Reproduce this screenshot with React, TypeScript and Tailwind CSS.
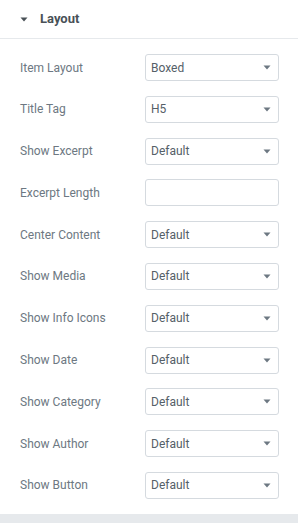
import React from "react";

const rows: { label: string; value: string | null }[] = [
  { label: "Item Layout", value: "Boxed" },
  { label: "Title Tag", value: "H5" },
  { label: "Show Excerpt", value: "Default" },
  { label: "Excerpt Length", value: null },
  { label: "Center Content", value: "Default" },
  { label: "Show Media", value: "Default" },
  { label: "Show Info Icons", value: "Default" },
  { label: "Show Date", value: "Default" },
  { label: "Show Category", value: "Default" },
  { label: "Show Author", value: "Default" },
  { label: "Show Button", value: "Default" },
];

function Caret({ className }: { className?: string }) {
  return (
    <svg width="8" height="5" viewBox="0 0 8 5" className={className}>
      <path d="M0.5 0.5 L7.5 0.5 L4 4.5 Z" fill="currentColor" />
    </svg>
  );
}

export default function App() {
  return (
    <div
      className="w-[298px] h-[523px] bg-white flex flex-col overflow-hidden"
      style={{ fontFamily: "Roboto, 'Liberation Sans', sans-serif" }}
    >
      <div className="h-[39px] shrink-0 flex items-center border-b border-[#e6e9ec]">
        <Caret className="ml-[20px] text-[#495157]" />
        <span className="ml-[12px] text-[13px] font-bold text-[#495157]">Layout</span>
      </div>
      <div className="flex flex-col gap-[14.8px] pt-[15px] pb-[15px] pl-[20px] pr-[19px]">
        {rows.map((r) => (
          <div key={r.label} className="flex items-center h-[27px]">
            <span className="w-[125px] text-[12px] text-[#6d7882]">{r.label}</span>
            <div className="flex-1 h-[27px] border border-[#d5dadf] rounded-[3px] flex items-center justify-between pl-[5px] pr-[7px]">
              <span className="text-[12px] text-[#556068]">{r.value ?? ""}</span>
              {r.value !== null && <Caret className="text-[#6d7882]" />}
            </div>
          </div>
        ))}
      </div>
      <div className="flex-1 bg-[#e6e9ec]" />
    </div>
  );
}
